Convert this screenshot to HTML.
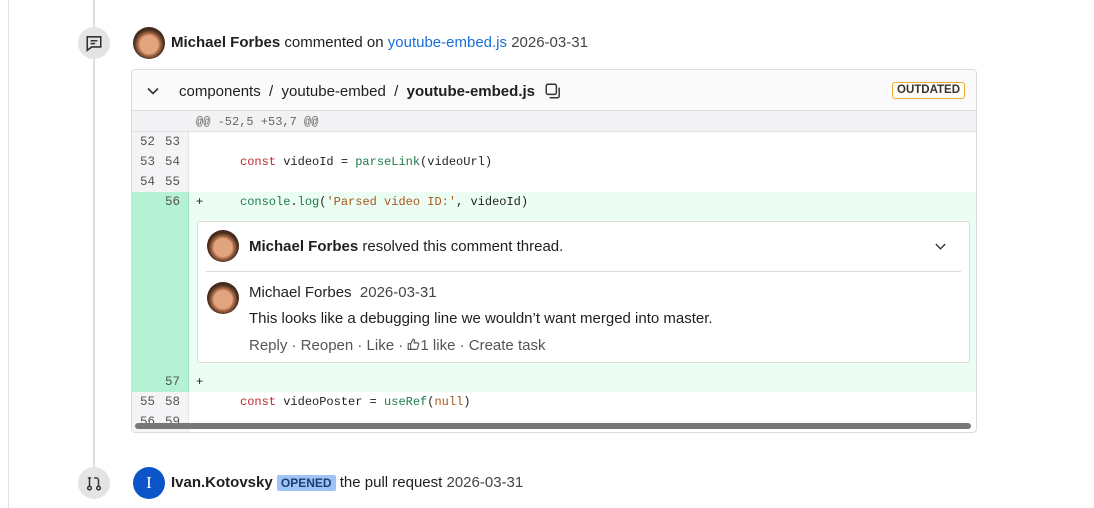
<!DOCTYPE html>
<html><head><style>
*{margin:0;padding:0;box-sizing:border-box}
body{width:1094px;height:508px;background:#fff;font-family:"Liberation Sans",sans-serif;color:#1f1f1f;position:relative;overflow:hidden;font-size:15px}
.abs{position:absolute}
.mono{font-family:"Liberation Mono",monospace;font-size:12px}
.av{border-radius:50%;background:radial-gradient(circle at 50% 55%,#e2a47e 0 38%,#b5734d 45%,#4a2e1f 62%,#2a1a12 100%)}
.row{position:absolute;left:0;width:844px;height:20px}
.gut{position:absolute;left:0;width:57px;height:100%;background:#f4f4f6;color:#555;font-family:"Liberation Mono",monospace;font-size:12.5px;line-height:20px;border-right:1px solid #e4e4e7}
.gut span{position:absolute}
.code{position:absolute;left:108px;line-height:20px;white-space:pre}
.kw{color:#c0282d}.fn{color:#1d7a4a}.st{color:#a8571c}
</style></head><body>
<div class="abs" style="left:8px;top:0;width:1px;height:508px;background:#e2e2e2"></div>
<div class="abs" style="left:93px;top:0;width:2px;height:470px;background:#dedee0"></div>
<div class="abs" style="left:78px;top:27px;width:32px;height:32px;border-radius:50%;background:#e4e4e7"></div>
<svg class="abs" style="left:85px;top:34px" width="18" height="18" viewBox="0 0 16 16" fill="none" stroke="#333" stroke-width="1.4"><path d="M2 2.5h12v9H6l-4 3z"/><path d="M5 6h6M5 8.5h4"/></svg>
<div class="abs av" style="left:133px;top:27px;width:32px;height:32px"></div>
<div class="abs" style="left:171px;top:34px;line-height:18px"><b>Michael Forbes</b> commented on <span style="color:#1a6ed8">youtube-embed.js</span> <span style="color:#444">2026-03-31</span></div>

<div class="abs" style="left:131px;top:69px;width:846px;height:364px;border:1px solid #dcdcde;border-radius:4px;overflow:hidden">
 <div class="abs" style="left:0;top:0;width:846px;height:41px;background:#fafafa;border-bottom:1px solid #dcdcde"></div>
 <svg class="abs" style="left:14px;top:14px" width="14" height="14" viewBox="0 0 14 14" fill="none" stroke="#333" stroke-width="1.6"><path d="M2 4.5l5 5 5-5"/></svg>
 <div class="abs" style="left:47px;top:13px;line-height:18px">components &nbsp;/ &nbsp;youtube-embed &nbsp;/ &nbsp;<b>youtube-embed.js</b></div>
 <svg class="abs" style="left:412px;top:12px" width="18" height="18" viewBox="0 0 16 16" fill="none" stroke="#333" stroke-width="1.3"><rect x="2" y="2" width="9" height="9" rx="1.5"/><path d="M13.5 5v7.5a1.5 1.5 0 0 1-1.5 1.5H5"/></svg>
 <div class="abs" style="left:760px;top:12px;height:17px;padding:0 4px;border:1px solid #f0a830;border-radius:3px;background:#fffdf5;font-size:11.5px;font-weight:bold;line-height:15px;color:#333">OUTDATED</div>
 <div class="abs" style="left:0;top:41px;width:846px;height:21px;background:#f2f2f4;border-bottom:1px solid #e0e0e2"></div>
 <div class="abs mono" style="left:64px;top:44px;color:#666;line-height:16px">@@ -52,5 +53,7 @@</div>
 <div class="abs" style="left:0;top:62px;width:846px;height:301px">
  <div class="row" style="top:0"><div class="gut"><span style="left:8px">52</span><span style="left:33px">53</span></div></div>
  <div class="row" style="top:20px"><div class="gut"><span style="left:8px">53</span><span style="left:33px">54</span></div><div class="code mono"><span class="kw">const</span> videoId = <span class="fn">parseLink</span>(videoUrl)</div></div>
  <div class="row" style="top:40px"><div class="gut"><span style="left:8px">54</span><span style="left:33px">55</span></div></div>
  <div class="row" style="top:60px;height:200px;background:#ecfdf4"><div class="gut" style="background:#b4f1d5;border-right:1px solid #9fe3c3"><span style="left:33px;top:0">56</span><span style="left:33px;top:180px">57</span></div>
   <div class="code mono" style="left:64px">+</div>
   <div class="code mono" style="left:108px"><span class="fn">console</span>.<span class="fn">log</span>(<span class="st">'Parsed video ID:'</span>, videoId)</div>
   <div class="code mono" style="left:64px;top:180px">+</div>
  </div>
  <div class="row" style="top:260px"><div class="gut"><span style="left:8px">55</span><span style="left:33px">58</span></div><div class="code mono"><span class="kw">const</span> videoPoster = <span class="fn">useRef</span>(<span class="st">null</span>)</div></div>
  <div class="row" style="top:280px"><div class="gut"><span style="left:8px">56</span><span style="left:33px">59</span></div></div>
 </div>
 <div class="abs" style="left:3px;top:353px;width:836px;height:6px;border-radius:3px;background:#777"></div>
</div>

<div class="abs" style="left:197px;top:221px;width:773px;height:142px;border:1px solid #dcdcde;border-radius:3px;background:#fff"></div>
<div class="abs av" style="left:207px;top:230px;width:32px;height:32px"></div>
<div class="abs" style="left:249px;top:238px;line-height:18px"><b>Michael Forbes</b> resolved this comment thread.</div>
<svg class="abs" style="left:934px;top:240px" width="13" height="13" viewBox="0 0 14 14" fill="none" stroke="#333" stroke-width="1.5"><path d="M2 4.5l5 5 5-5"/></svg>
<div class="abs" style="left:206px;top:271px;width:755px;height:1px;background:#dcdcde"></div>
<div class="abs av" style="left:207px;top:282px;width:32px;height:32px"></div>
<div class="abs" style="left:249px;top:284px;line-height:18px"><span style="color:#222">Michael Forbes</span> &nbsp;<span style="color:#444">2026-03-31</span></div>
<div class="abs" style="left:249px;top:310px;line-height:18px">This looks like a debugging line we wouldn’t want merged into master.</div>
<div class="abs" style="left:249px;top:337px;line-height:18px;color:#555">Reply · Reopen · Like · <svg width="13" height="13" viewBox="0 0 16 16" fill="none" stroke="#555" stroke-width="1.4" style="vertical-align:-1px"><path d="M1.5 7h3v7h-3zM4.5 7l3-5.5c1.5 0 2 1 1.7 2.5L8.8 6H13a1.5 1.5 0 0 1 1.4 1.9l-1.5 5A1.5 1.5 0 0 1 11.5 14h-7"/></svg>1 like · Create task</div>

<div class="abs" style="left:78px;top:467px;width:32px;height:32px;border-radius:50%;background:#e4e4e7"></div>
<svg class="abs" style="left:85px;top:474px" width="18" height="18" viewBox="0 0 16 16" fill="none" stroke="#333" stroke-width="1.3"><circle cx="4" cy="12.5" r="1.6"/><circle cx="12" cy="12.5" r="1.6"/><path d="M4 11V3.5M2.5 3.5h3M12 11V5.5a2 2 0 0 0-2-2H8"/></svg>
<div class="abs" style="left:133px;top:467px;width:32px;height:32px;border-radius:50%;background:#0b55c9;color:#fff;font-family:'Liberation Serif',serif;font-size:17px;text-align:center;line-height:32px">I</div>
<div class="abs" style="left:171px;top:474px;line-height:18px"><b>Ivan.Kotovsky</b> <span style="background:#9ec3f5;border-radius:2px;font-size:12px;font-weight:bold;padding:1px 4px;color:#1b3e74">OPENED</span> the pull request <span style="color:#444">2026-03-31</span></div>
</body></html>
